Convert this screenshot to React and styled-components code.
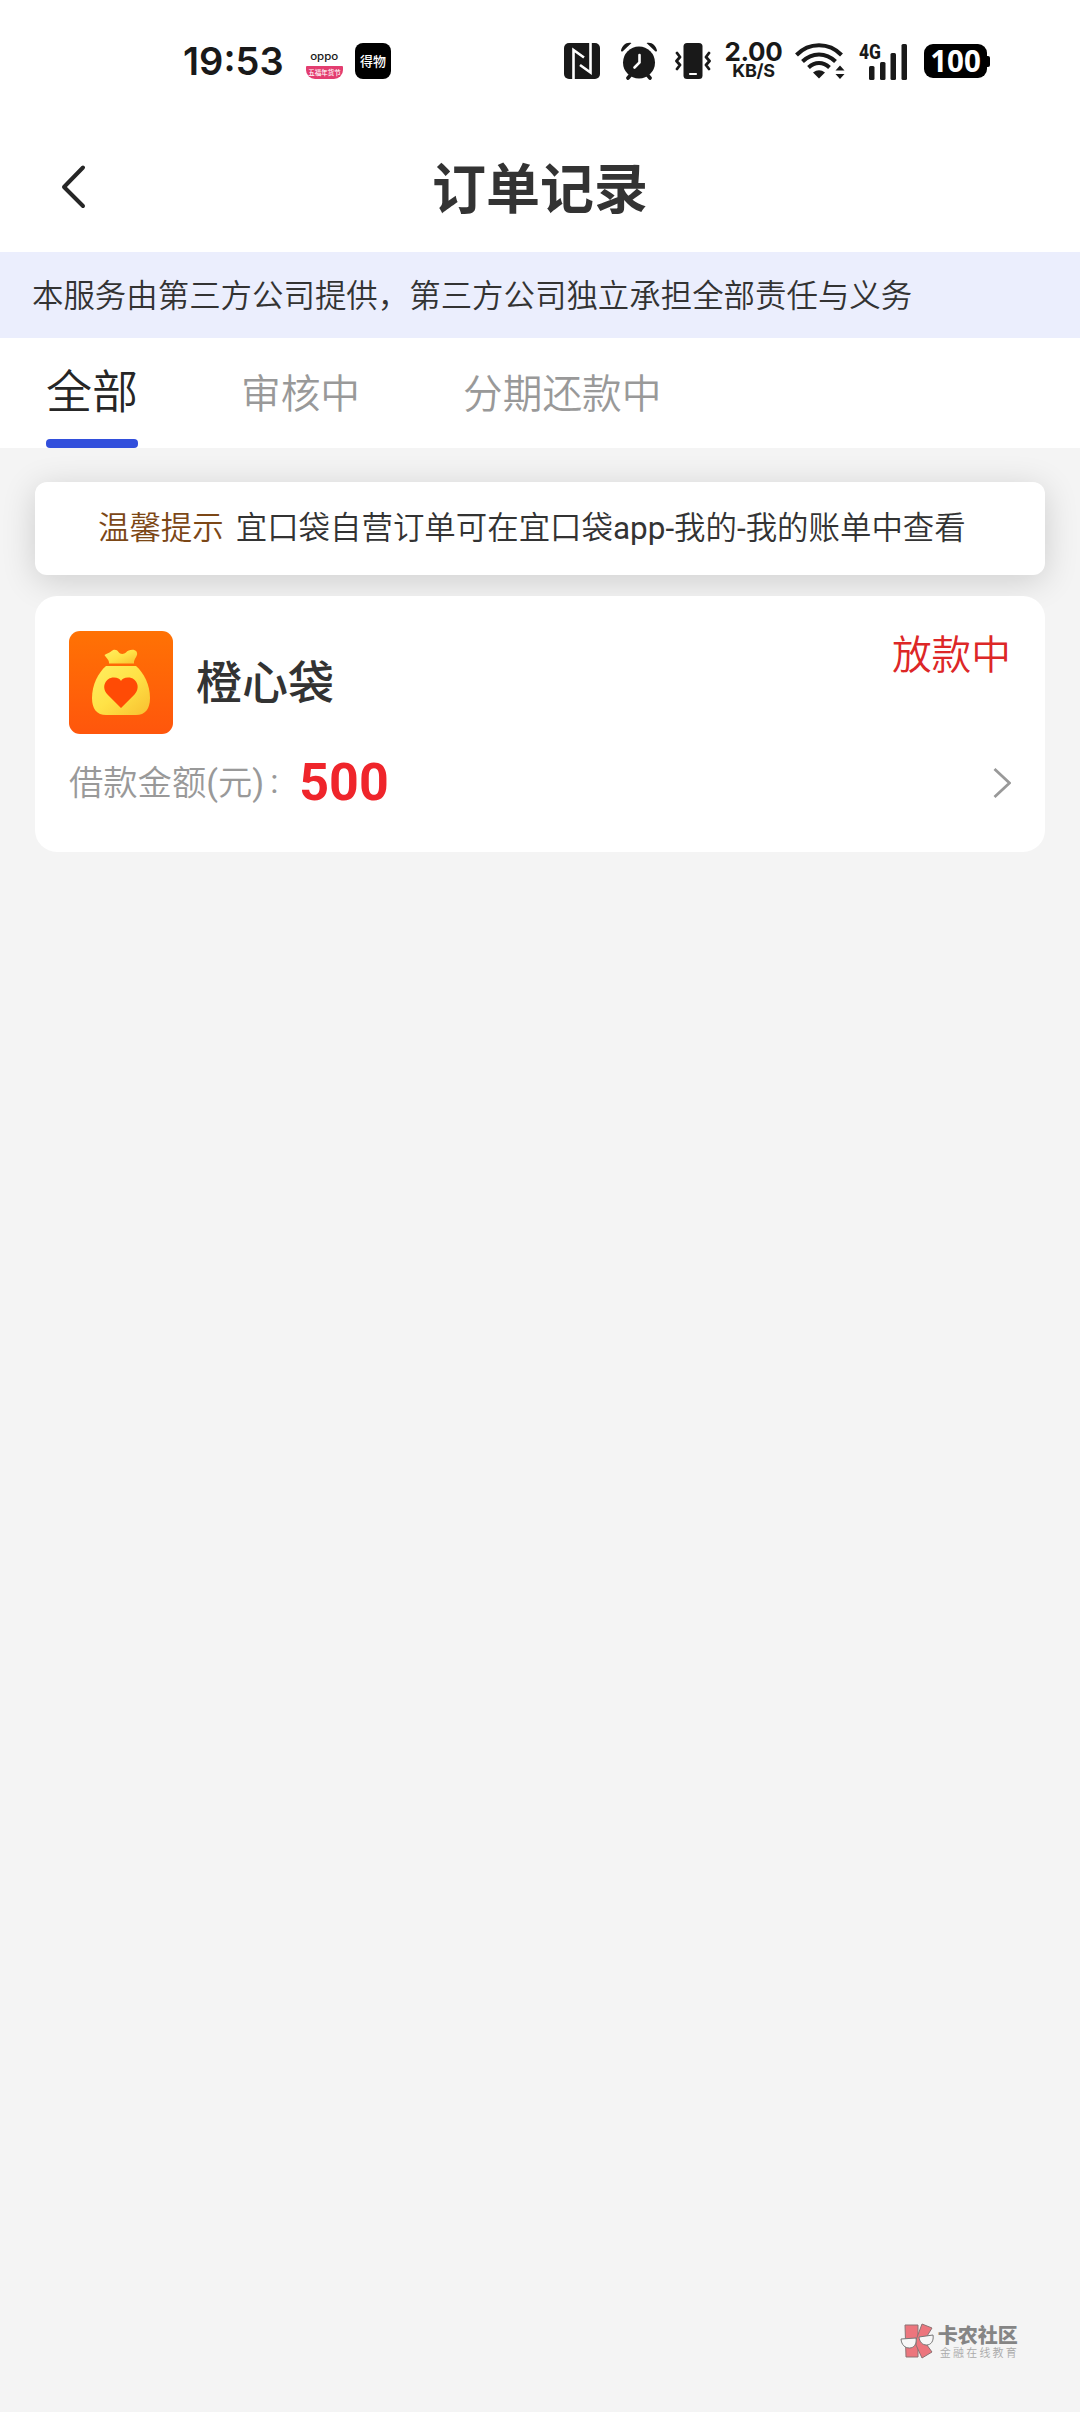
import React from "react";
import styled, { createGlobalStyle } from "styled-components";

const tabs = ["全部", "审核中", "分期还款中"];

const orders = [{ name: "橙心袋", status: "放款中", amount: 500 }];

function StatusBar() {
  return (
    <Status>
      <Clock>19:53</Clock>
      <OppoBadge>
        <OppoName>oppo</OppoName>
        <OppoSale>五福年货节</OppoSale>
      </OppoBadge>
      <DewuBadge>得物</DewuBadge>
      <Signals>
        <NfcIcon />
        <AlarmIcon />
        <VibrateIcon />
        <Speed>
          <b>2.00</b>
          <small>KB/S</small>
        </Speed>
        <WifiIcon />
        <CellIcon />
        <Battery>100</Battery>
      </Signals>
    </Status>
  );
}

function NfcIcon() {
  return (
    <svg width="36" height="36" viewBox="0 0 36 36">
      <rect width="36" height="36" rx="5" fill="#191919" />
      <path
        d="M9.500 36V7L20 14.500M26.500 0V29.500L16 22"
        fill="none"
        stroke="#fff"
        strokeWidth="2.600"
      />
    </svg>
  );
}

function AlarmIcon() {
  return (
    <svg width="36" height="38" viewBox="0 0 36 38">
      <g fill="none" stroke="#191919" strokeLinecap="round">
        <path d="M9.500 33L7 36M26.500 33L29 36" strokeWidth="3.600" />
      </g>
      <path
        d="M0 8.500C1 3.500 5.500 -.5 10.500 1L1.800 9.300C1 9.800 0 9.500 0 8.500ZM36 8.500C35 3.500 30.500 -.5 25.500 1L34.200 9.300C35 9.800 36 9.500 36 8.500Z"
        fill="#191919"
      />
      <circle cx="18" cy="20.500" r="16" fill="#191919" />
      <path
        d="M18.500 13V20.500L13.500 25.500"
        fill="none"
        stroke="#fff"
        strokeWidth="2.600"
        strokeLinecap="round"
      />
    </svg>
  );
}

function VibrateIcon() {
  return (
    <svg width="36" height="36" viewBox="0 0 36 36">
      <rect x="8.500" width="19" height="36" rx="3.500" fill="#191919" />
      <path d="M15 31H21" stroke="#fff" strokeWidth="2.200" strokeLinecap="round" />
      <path
        d="M2 10L5 14L1.500 18L5 22L2 26M34 10L31 14L34.500 18L31 22L34 26"
        fill="none"
        stroke="#191919"
        strokeWidth="2.800"
        strokeLinecap="round"
        strokeLinejoin="round"
      />
    </svg>
  );
}

function WifiIcon() {
  return (
    <svg width="51" height="37" viewBox="0 0 51 37">
      <g fill="none" stroke="#191919" strokeWidth="4">
        <path d="M1.500 12C14 -1 34 -1 46.500 12" />
        <path d="M7.500 18.500C17 9 31 9 40.500 18.500" />
        <path d="M13.500 24.500C20 18.500 28 18.500 34.500 24.500" />
      </g>
      <path d="M18 29.500Q24 25 30 29.500L24 35.500Z" fill="#191919" />
      <path d="M40.500 27.500L45 22.500L49.500 27.500ZM40.500 31H49.500L45 36Z" fill="#191919" />
    </svg>
  );
}

function CellIcon() {
  return (
    <svg width="49" height="37" viewBox="0 0 49 37">
      <text
        x="0"
        y="15.500"
        fontFamily="Roboto"
        fontSize="20"
        fontWeight="800"
        textLength="22"
        lengthAdjust="spacingAndGlyphs"
        fill="#191919"
      >
        4G
      </text>
      <g fill="#191919">
        <rect x="10" y="23" width="5.500" height="14" rx="1.500" />
        <rect x="21" y="19" width="5.500" height="18" rx="1.500" />
        <rect x="31.500" y="10" width="5.500" height="27" rx="1.500" />
        <rect x="42.500" y="1" width="5.500" height="36" rx="1.500" />
      </g>
    </svg>
  );
}

function BagLogo() {
  return (
    <svg width="104" height="103" viewBox="0 0 104 103">
      <defs>
        <linearGradient id="tile" x1="0" y1="0" x2="0" y2="1">
          <stop offset="0" stopColor="#ff7204" />
          <stop offset="1" stopColor="#ff560c" />
        </linearGradient>
        <linearGradient id="bag" x1="0" y1="0" x2="1" y2="1">
          <stop offset="0" stopColor="#ffee60" />
          <stop offset=".5" stopColor="#ffe246" />
          <stop offset="1" stopColor="#f8bf30" />
        </linearGradient>
      </defs>
      <rect width="104" height="103" rx="11" fill="url(#tile)" />
      <path
        d="M40 32.500C40.500 29 37 27 35.500 24C38 22 40 22.500 42 20.500C44.500 18 48 18.500 49.500 21C51 23.500 55 23.500 57 21.500C59 19 65 17.500 67.500 20.500C70 25 64.500 27 65 32.500Z"
        fill="url(#bag)"
      />
      <path
        d="M37 35H67C75 42 81 54 81 67C81 78 76 84 67 84H37C28 84 23 78 23 67C23 54 29 42 37 35Z"
        fill="url(#bag)"
      />
      <path
        d="M52 77L38.500 63.500C31 55 38 46 45 46.500C48.500 46.500 51 48 52 50C53 48 55.500 46.500 59 46.500C66 46 73 55 65.500 63.500Z"
        fill="#ff4b05"
      />
    </svg>
  );
}

function WatermarkLogo() {
  return (
    <svg width="36" height="37" viewBox="0 0 36 37">
      <g fill="#ec757d" stroke="#8c7374" strokeWidth="1">
        <path d="M5 2H18V34H6Z" />
        <path d="M22 1L32 5L24 18L32 29L22 35L16 22V17Z" />
      </g>
      <g fill="#f7f7f7" stroke="#777" strokeWidth="1">
        <path d="M1 16L16 15C17 21 14 25 9.500 25C5 25 1.500 22 1 16Z" />
        <path d="M19 14L33 12C34 18 31 22 26.500 22C22.500 22 19.500 19 19 14Z" />
      </g>
    </svg>
  );
}

function OrderCard({ name, status, amount }) {
  return (
    <Card>
      <CardHead>
        <BagLogo />
        <Name>{name}</Name>
        <State>{status}</State>
      </CardHead>
      <AmountRow>
        <Label>
          借款金额<Latin>(</Latin>元<Latin>)</Latin>
        </Label>
        <Colon>:</Colon>
        <Amount>{amount}</Amount>
        <svg width="19" height="32" viewBox="0 0 19 32">
          <path d="M2.500 2L17.500 16L2.500 30" fill="none" stroke="#999" strokeWidth="2.800" />
        </svg>
      </AmountRow>
    </Card>
  );
}

function App() {
  return (
    <Page>
      <GlobalStyle />
      <StatusBar />
      <Header>
        <svg width="26" height="46" viewBox="0 0 26 46">
          <path
            d="M23 3.500L4 23L23 42"
            fill="none"
            stroke="#262626"
            strokeWidth="4"
            strokeLinecap="round"
            strokeLinejoin="round"
          />
        </svg>
        <Title>订单记录</Title>
      </Header>
      <Banner>本服务由第三方公司提供，第三方公司独立承担全部责任与义务</Banner>
      <Tabs>
        {tabs.map((tab, i) => (
          <Tab key={tab} $active={i === 0}>
            {tab}
          </Tab>
        ))}
      </Tabs>
      <Content>
        <Notice>
          <Hint>温馨提示</Hint>
          <span>
            宜口袋自营订单可在宜口袋<Latin>app-</Latin>我的<Latin>-</Latin>我的账单中查看
          </span>
        </Notice>
        {orders.map((order) => (
          <OrderCard key={order.name} {...order} />
        ))}
      </Content>
      <Watermark>
        <WatermarkLogo />
        <WatermarkText>
          <b>卡农社区</b>
          <span>金融在线教育</span>
        </WatermarkText>
      </Watermark>
    </Page>
  );
}

const GlobalStyle = createGlobalStyle`
  * {
    box-sizing: border-box;
  }

  body {
    margin: 0;
    background: #f4f4f4;
  }

  svg {
    display: block;
    flex-shrink: 0;
  }
`;

const Page = styled.div`
  display: flex;
  flex-direction: column;
  height: 2412px;
  background: #f4f4f4;
  color: #333;
  font-family: Roboto, "Noto Sans CJK SC", sans-serif;
  font-weight: 350;
  white-space: nowrap;
  overflow: hidden;
`;

const Latin = styled.span`
  font-weight: 400;
`;

const Status = styled.div`
  display: flex;
  align-items: center;
  height: 122px;
  padding: 0 87px 0 183px;
  background: #fff;
  color: #191919;
`;

const Clock = styled.div`
  width: 122px;
  font: 600 38px/40px Inter, sans-serif;
`;

const OppoBadge = styled.div`
  display: flex;
  flex-direction: column;
  align-items: center;
  justify-content: flex-end;
  width: 39px;
  height: 36px;
  margin-right: 11px;
`;

const OppoName = styled.div`
  font: 500 10px/14px Inter, sans-serif;
  transform: scaleX(1.15);
`;

const OppoSale = styled.div`
  width: 37px;
  height: 13px;
  margin-top: 3px;
  border-radius: 1px 1px 9px 9px;
  background: #e33d70;
  color: #fff;
  font: 500 6.500px/13px "Noto Sans CJK SC", sans-serif;
  text-align: center;
`;

const DewuBadge = styled.div`
  width: 36px;
  height: 36px;
  border-radius: 8px;
  background: #000;
  color: #fff;
  font: 500 13px/35px "Noto Sans CJK SC", sans-serif;
  text-align: center;
`;

const Signals = styled.div`
  display: grid;
  grid-template-columns: 57px 54px 49px 71px 64px 65px 69px;
  align-items: center;
  margin-left: auto;
`;

const Speed = styled.div`
  display: flex;
  flex-direction: column;
  align-items: center;
  width: 59px;
  font-family: Inter, sans-serif;

  b {
    font-size: 26px;
    font-weight: 700;
    letter-spacing: -0.3px;
    line-height: 20px;
  }

  small {
    font-size: 18px;
    font-weight: 700;
    letter-spacing: -0.3px;
    line-height: 18px;
  }
`;

const Battery = styled.div`
  position: relative;
  width: 63px;
  height: 34px;
  border-radius: 9px;
  background: #000;
  color: #fff;
  font: 700 29.500px/34px "Noto Sans", sans-serif;
  text-align: center;

  &::after {
    content: "";
    position: absolute;
    top: 12px;
    right: -3px;
    width: 4px;
    height: 11px;
    border-radius: 0 2px 2px 0;
    background: #000;
  }
`;

const Header = styled.div`
  display: flex;
  align-items: center;
  height: 130px;
  padding: 0 60px;
  background: #fff;
`;

const Title = styled.h1`
  flex: 1;
  margin: 0 26px 0 0;
  padding-top: 7px;
  font-size: 54px;
  font-weight: 700;
  line-height: 60px;
  text-align: center;
`;

const Banner = styled.div`
  height: 86px;
  padding-left: 32px;
  background: #ebeefd;
  font-size: 31.450px;
  line-height: 89px;
`;

const Tabs = styled.div`
  display: flex;
  gap: 103px;
  height: 110px;
  padding-left: 46px;
  background: #fff;
`;

const Tab = styled.div`
  height: 110px;
  color: ${({ $active }) => ($active ? "#262626" : "#999")};
  font-size: ${({ $active }) => ($active ? "46px" : "39.700px")};
  line-height: ${({ $active }) => ($active ? "109px" : "113px")};

  &::after {
    content: "";
    display: ${({ $active }) => ($active ? "block" : "none")};
    height: 9px;
    margin-top: -8px;
    border-radius: 4px;
    background: #324fdc;
  }
`;

const Content = styled.div`
  flex: 1;
  padding: 34px 35px;
`;

const Notice = styled.div`
  display: flex;
  gap: 12px;
  height: 93px;
  padding-left: 63px;
  border-radius: 12px;
  background: #fff;
  box-shadow: 0 6px 34px rgba(0, 0, 0, 0.16);
  font-size: 31.450px;
  line-height: 93px;
`;

const Hint = styled.span`
  color: #7c4716;
`;

const Card = styled.div`
  position: relative;
  height: 256px;
  margin-top: 21px;
  padding: 35px 34px;
  border-radius: 22px;
  background: #fff;
`;

const CardHead = styled.div`
  display: flex;
`;

const Name = styled.div`
  flex: 1;
  padding-left: 23px;
  font-size: 46px;
  font-weight: 500;
  line-height: 104px;
`;

const State = styled.div`
  color: #dd2727;
  font-size: 39.700px;
  line-height: 49px;
`;

const AmountRow = styled.div`
  display: flex;
  align-items: center;
  height: 95px;

  svg {
    margin-left: auto;
  }
`;

const Label = styled.span`
  padding-bottom: 6px;
  color: #999;
  font-size: 34.300px;
`;

const Colon = styled.span`
  width: 35px;
  padding-bottom: 3px;
  padding-left: 6px;
  color: #999;
  font-size: 34px;
  font-weight: 400;
`;

const Amount = styled.span`
  color: #ef252b;
  font-size: 52px;
  font-weight: 700;
`;

const Watermark = styled.div`
  display: flex;
  align-items: center;
  align-self: flex-end;
  gap: 2px;
  margin: 0 61px 51px 0;
`;

const WatermarkText = styled.div`
  display: flex;
  flex-direction: column;
  padding-top: 4px;
  color: #858585;

  b {
    font-size: 20px;
    font-weight: 900;
    line-height: 20px;
  }

  span {
    padding-left: 2px;
    color: #aaa;
    font-size: 11px;
    letter-spacing: 2.200px;
    line-height: 15px;
  }
`;

export default App;
